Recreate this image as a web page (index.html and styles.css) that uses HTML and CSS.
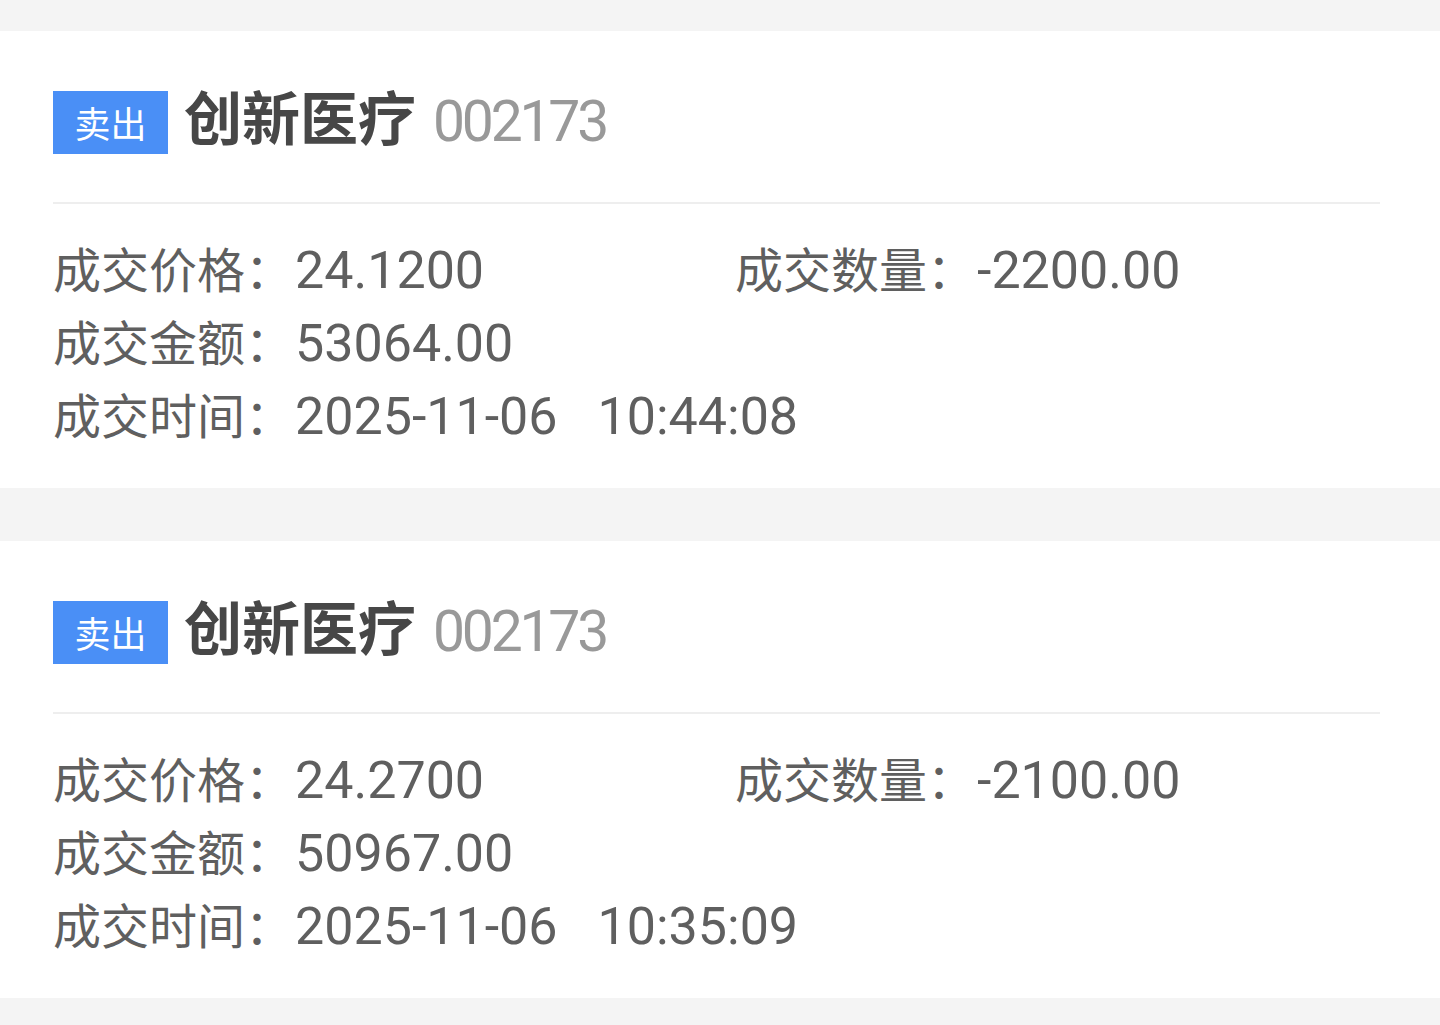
FILE: index.html
```html
<!DOCTYPE html>
<html lang="zh-CN">
<head>
<meta charset="utf-8">
<title>成交记录</title>
<link rel="stylesheet" href="styles.css">
</head>
<body>
<div class="list">
  <section class="card">
    <div class="head">
      <span class="badge">卖出</span>
      <span class="name">创新医疗</span>
      <span class="code">002173</span>
    </div>
    <div class="divider"></div>
    <div class="rows">
      <div class="row"><span class="label">成交价格：</span><span class="val">24.1200</span></div>
      <div class="row"><span class="label">成交数量：</span><span class="val">-2200.00</span></div>
      <div class="row full"><span class="label">成交金额：</span><span class="val">53064.00</span></div>
      <div class="row full"><span class="label">成交时间：</span><span class="val">2025-11-06<span class="sp"></span>10:44:08</span></div>
    </div>
  </section>
  <section class="card">
    <div class="head">
      <span class="badge">卖出</span>
      <span class="name">创新医疗</span>
      <span class="code">002173</span>
    </div>
    <div class="divider"></div>
    <div class="rows">
      <div class="row"><span class="label">成交价格：</span><span class="val">24.2700</span></div>
      <div class="row"><span class="label">成交数量：</span><span class="val">-2100.00</span></div>
      <div class="row full"><span class="label">成交金额：</span><span class="val">50967.00</span></div>
      <div class="row full"><span class="label">成交时间：</span><span class="val">2025-11-06<span class="sp"></span>10:35:09</span></div>
    </div>
  </section>
</div>
</body>
</html>
```

FILE: styles.css
```css
html, body {
  margin: 0;
  padding: 0;
  background: #f4f4f4;
}
body {
  font-family: Roboto, "Noto Sans CJK SC", sans-serif;
  height: 1025px;
  overflow: hidden;
}
.list {
  padding-top: 31px;
  display: flex;
  flex-direction: column;
  gap: 53px;
}
.card {
  background: #ffffff;
  padding: 60px 60px 38px 53px;
}
.head {
  display: flex;
  align-items: center;
  height: 63px;
}
.badge {
  width: 115px;
  height: 63px;
  background: #4a8ff6;
  color: #ffffff;
  font-family: "Noto Sans CJK SC", sans-serif;
  font-size: 36px;
  line-height: 63px;
  text-align: center;
}
.name {
  margin-left: 16px;
  margin-top: -14px;
  font-family: "Noto Sans CJK SC", sans-serif;
  font-weight: 700;
  font-size: 58px;
  color: #474747;
  line-height: 63px;
}
.code {
  margin-left: 17px;
  margin-top: -2px;
  font-family: Roboto, sans-serif;
  font-size: 57px;
  letter-spacing: -3.2px;
  color: #999999;
  line-height: 63px;
}
.divider {
  height: 2px;
  background: #eeeeee;
  margin-top: 48px;
}
.rows {
  display: grid;
  grid-template-columns: 682px 1fr;
  padding-top: 27px;
}
.row {
  display: flex;
  align-items: baseline;
  height: 73px;
  line-height: 73px;
  white-space: nowrap;
  color: #5f5f5f;
}
.row.full {
  grid-column: 1 / 3;
}
.label {
  font-family: "Noto Sans CJK SC", sans-serif;
  font-size: 48px;
}
.val {
  font-family: Roboto, sans-serif;
  font-size: 52px;
  margin-left: 2px;
}
.sp {
  display: inline-block;
  width: 40px;
}
```
